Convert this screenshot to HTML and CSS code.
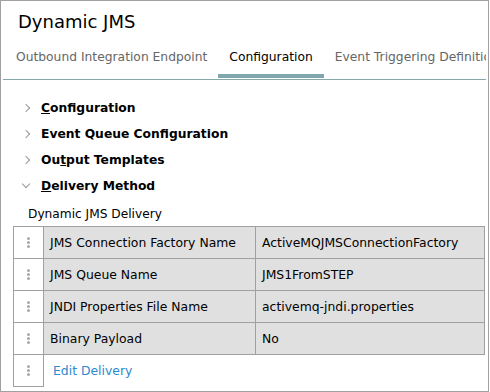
FILE: index.html
```html
<!DOCTYPE html>
<html lang="en">

<head>
    <meta charset="UTF-8">
    <title>Dynamic JMS</title>
    <link rel="stylesheet" href="styles.css">
</head>

<body>
    <div class="frame">
        <h1 class="title">Dynamic JMS</h1>
        <div class="tabs">
            <span class="tab">Outbound Integration Endpoint</span>
            <span class="tab current">Configuration</span>
            <span class="tab">Event Triggering Definition</span>
        </div>
        <ul class="tree">
            <li><i class="chev"></i><u>C</u>onfiguration</li>
            <li><i class="chev"></i>Event Queue Configuration</li>
            <li><i class="chev"></i>Ou<u>t</u>put Templates</li>
            <li><i class="chev open"></i><u>D</u>elivery Method</li>
        </ul>
        <p class="caption">Dynamic JMS Delivery</p>
        <table class="props">
            <tr>
                <td class="handle"><b></b></td>
                <td class="key">JMS Connection Factory Name</td>
                <td class="val">ActiveMQJMSConnectionFactory</td>
            </tr>
            <tr>
                <td class="handle"><b></b></td>
                <td class="key">JMS Queue Name</td>
                <td class="val">JMS1FromSTEP</td>
            </tr>
            <tr>
                <td class="handle"><b></b></td>
                <td class="key">JNDI Properties File Name</td>
                <td class="val">activemq-jndi.properties</td>
            </tr>
            <tr>
                <td class="handle"><b></b></td>
                <td class="key">Binary Payload</td>
                <td class="val">No</td>
            </tr>
            <tr class="last">
                <td class="handle"><b></b></td>
                <td class="link" colspan="2"><a href="javascript:void(0)">Edit Delivery</a></td>
            </tr>
        </table>
    </div>
</body>

</html>
```

FILE: styles.css
```css
* {
    margin: 0;
    padding: 0;
    box-sizing: border-box;
}

body {
    background: #fff;
    font-family: "DejaVu Sans", Verdana, sans-serif;
    font-size: 12px;
    color: #000;
}

.frame {
    width: 489px;
    height: 392px;
    border: 1px solid #a0a0a0;
    overflow: hidden;
}

.title {
    font-size: 18px;
    font-weight: normal;
    padding: 10px 0 0 17px;
    height: 42px;
}

.tabs {
    margin: 0 2px 0 2px;
    height: 37px;
    border-bottom: 1px solid #86a9ae;
    white-space: nowrap;
    overflow: hidden;
    display: flex;
}

.tab {
    padding: 7px 11px 0;
    color: #666;
    height: 35px;
    font-size: 12.3px;
}

.tab:first-child {
    padding-left: 13px;
}

.tab.current {
    color: #000;
    border-bottom: 4px solid #7fa7ad;
}

.tree {
    list-style: none;
    padding: 15px 0 0 22px;
    font-size: 12.3px;
    font-weight: bold;
}

.tree li {
    height: 26px;
    display: flex;
    align-items: center;
}

.tree u {
    text-decoration: underline;
}

.chev {
    width: 6px;
    height: 6px;
    border-right: 1.3px solid #999;
    border-top: 1.3px solid #999;
    transform: rotate(45deg);
    margin: 0 12px 0 0;
}

.chev.open {
    transform: rotate(135deg);
    margin-top: -4px;
}

.caption {
    padding: 8px 0 0 27px;
    height: 27px;
    font-size: 12.2px;
}

.props {
    margin-left: 12px;
    border-collapse: collapse;
    table-layout: fixed;
    font-size: 12.4px;
}

.props td {
    height: 32px;
    border: 1px solid #a0a0a0;
    padding: 0 6px;
    white-space: nowrap;
}

.props .handle {
    width: 30px;
    padding: 0;
}

.props .handle b {
    display: block;
    margin: 0 auto;
    width: 3px;
    height: 3px;
    border-radius: 50%;
    background: #aaa;
    box-shadow: 0 4px 0 #aaa, 0 8px 0 #aaa;
    transform: translateY(-4px);
}

.props .key {
    width: 212px;
    background: #e0e0e0;
}

.props .val {
    width: 229px;
    background: #e0e0e0;
}

.props .last .link {
    border: none;
    border-left: 1px solid #a0a0a0;
    padding-left: 9px;
}

.link a {
    color: #2a8ad2;
    text-decoration: none;
}
```
